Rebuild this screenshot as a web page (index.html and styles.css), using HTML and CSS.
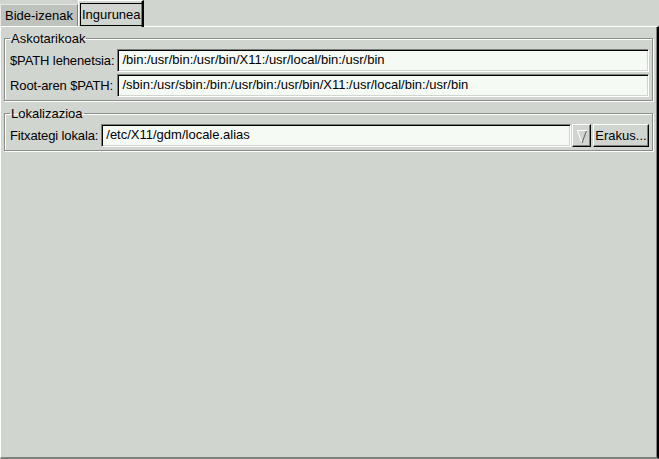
FILE: index.html
```html
<!DOCTYPE html>
<html>
<head>
<meta charset="utf-8">
<link rel="stylesheet" href="styles.css">
</head>
<body>
<div class="tabs">
  <div class="tab inactive">Bide-izenak</div>
  <div class="tab active"><span class="focus">Ingurunea</span></div>
</div>
<div class="page">
  <fieldset class="frame frame-misc">
    <legend>Askotarikoak</legend>
    <div class="grid">
      <label class="lbl">$PATH lehenetsia:</label>
      <div class="entry">/bin:/usr/bin:/usr/bin/X11:/usr/local/bin:/usr/bin</div>
      <label class="lbl">Root-aren $PATH:</label>
      <div class="entry">/sbin:/usr/sbin:/bin:/usr/bin:/usr/bin/X11:/usr/local/bin:/usr/bin</div>
    </div>
  </fieldset>
  <fieldset class="frame frame-loc">
    <legend>Lokalizazioa</legend>
    <div class="row">
      <label class="lbl">Fitxategi lokala:</label>
      <div class="entry grow">/etc/X11/gdm/locale.alias</div>
      <div class="btn arrow"><svg width="12" height="16" viewBox="0 0 12 16"><path d="M1.5 2.5 L6 15" stroke="#ffffff" stroke-width="1" fill="none"/><path d="M10.5 2.5 L6 15" stroke="#5a5e5a" stroke-width="1" fill="none"/><path d="M1 2.5 H11" stroke="#ffffff" stroke-width="1" fill="none"/></svg></div>
      <div class="btn show">Erakus...</div>
    </div>
  </fieldset>
</div>
</body>
</html>
```
FILE: styles.css
```css
html, body {
  margin: 0;
  padding: 0;
  background: #d1d5d0;
  font-family: "Liberation Sans", Arial, sans-serif;
  font-size: 13px;
  color: #000;
  width: 659px;
  height: 459px;
  overflow: hidden;
}

.tabs {
  display: flex;
  align-items: flex-end;
  height: 26px;
  position: relative;
  z-index: 2;
}

.tab {
  box-sizing: border-box;
  display: flex;
  align-items: center;
}

.tab.inactive {
  height: 22px;
  width: 78px;
  padding-left: 4px;
  background: #bec2bd;
  border-top: 1px solid #e6e9e5;
  border-left: 1px solid #e6e9e5;
  border-right: 1px solid #7c807b;
}

.tab.active {
  height: 27px;
  width: 66px;
  margin-bottom: -1px;
  padding: 2px 2px 2px 1px;
  background: #d1d5d0;
  border-top: 1px solid #ffffff;
  border-left: 1px solid #ffffff;
  border-right: 2px solid #000000;
  box-shadow: inset -1px 0 0 #7c807b;
}

.focus {
  display: flex;
  align-items: center;
  height: 21px;
  padding: 0 1px;
  border: 1px solid #000;
}

.page {
  box-sizing: border-box;
  height: 433px;
  border-top: 1px solid #ffffff;
  border-left: 1px solid #ffffff;
  border-right: 2px solid #000;
  border-bottom: 2px solid #7c807b;
  box-shadow: inset -1px 0 0 #7c807b;
  padding: 4px 3px 0 3px;
}

.frame {
  margin: 0 1px 0 0;
  padding: 3px 3px 3px 5px;
  border: 1px solid #8a8e89;
  box-shadow: inset 1px 1px 0 #ffffff, 1px 1px 0 #ffffff;
  min-width: 0;
}

.frame legend {
  padding: 0 1px;
  margin-left: 0;
  line-height: 15px;
}

.frame-loc {
  margin-top: 5px;
  padding-top: 3px;
}

.grid {
  display: grid;
  grid-template-columns: auto 1fr;
  column-gap: 3px;
  row-gap: 2px;
  align-items: center;
}

.row {
  display: flex;
  align-items: center;
}

.lbl {
  white-space: nowrap;
  letter-spacing: -0.12px;
}

.entry {
  box-sizing: border-box;
  height: 23px;
  line-height: 19px;
  padding: 0 4px;
  background: #f5faf5;
  border-top: 1px solid #7c807b;
  border-left: 1px solid #7c807b;
  border-right: 1px solid #ffffff;
  border-bottom: 1px solid #ffffff;
  box-shadow: inset 1px 1px 0 #000, inset -1px -1px 0 #d1d5d0;
  white-space: nowrap;
  overflow: hidden;
}

.row .entry.grow {
  flex: 1;
  margin-left: 3px;
  height: 23px;
}

.btn {
  box-sizing: border-box;
  height: 23px;
  display: flex;
  align-items: center;
  justify-content: center;
  background: #d1d5d0;
  border-top: 1px solid #ffffff;
  border-left: 1px solid #ffffff;
  border-right: 1px solid #000;
  border-bottom: 1px solid #000;
  box-shadow: inset -1px -1px 0 #7c807b;
  padding: 0 3px;
}

.btn.arrow {
  width: 19px;
  margin-left: 1px;
  padding: 0;
}

.btn.show {
  margin-left: 2px;
  width: 56px;
  padding: 0;
}
```
